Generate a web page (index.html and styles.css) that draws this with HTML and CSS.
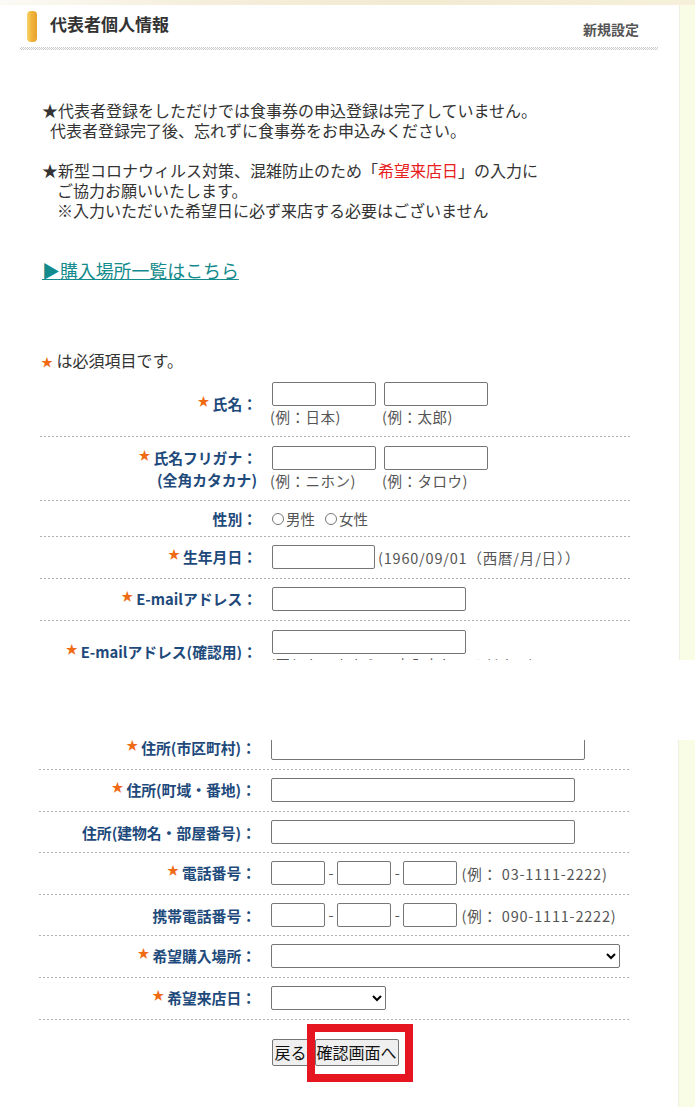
FILE: index.html
```html
<!DOCTYPE html>
<html lang="ja">
<head>
<meta charset="utf-8">
<title>代表者個人情報</title>
<link rel="stylesheet" href="styles.css">
</head>
<body>
<section class="shot shot-top">
  <div class="topstrip"></div>
  <div class="panel">
    <div class="head">
      <span class="head-bar"></span>
      <h1 class="head-title">代表者個人情報</h1>
      <span class="head-mode">新規設定</span>
    </div>
    <div class="head-dots"></div>

    <div class="notice n1">
      <p>★代表者登録をしただけでは食事券の申込登録は完了していません。</p>
      <p class="ind1">代表者登録完了後、忘れずに食事券をお申込みください。</p>
    </div>
    <div class="notice n2">
      <p>★新型コロナウィルス対策、混雑防止のため「<span class="red">希望来店日</span>」の入力に</p>
      <p class="ind2">ご協力お願いいたします。</p>
      <p class="ind2">※入力いただいた希望日に必ず来店する必要はございません</p>
    </div>
    <p class="link-line"><a class="shop-link" href="#">▶購入場所一覧はこちら</a></p>
    <p class="req-note"><span class="req">★</span> は必須項目です。</p>

    <div class="form">
      <div class="row row-help">
        <div class="label"><span class="req">★</span>氏名：</div>
        <div class="field">
          <div class="pair">
            <div class="col"><input class="in-name" type="text"><span class="help">(例：日本)</span></div>
            <div class="col"><input class="in-name" type="text"><span class="help">(例：太郎)</span></div>
          </div>
        </div>
      </div>
      <div class="row row-help">
        <div class="label"><span class="req">★</span>氏名フリガナ：<br>(全角カタカナ)</div>
        <div class="field">
          <div class="pair">
            <div class="col"><input class="in-name" type="text"><span class="help">(例：ニホン)</span></div>
            <div class="col"><input class="in-name" type="text"><span class="help">(例：タロウ)</span></div>
          </div>
        </div>
      </div>
      <div class="row row-radio">
        <div class="label">性別：</div>
        <div class="field radios">
          <label class="radio"><input type="radio" name="sex">男性</label>
          <label class="radio"><input type="radio" name="sex">女性</label>
        </div>
      </div>
      <div class="row">
        <div class="label"><span class="req">★</span>生年月日：</div>
        <div class="field inline">
          <input class="in-birth" type="text"><span class="after">(1960/09/01（西暦/月/日））</span>
        </div>
      </div>
      <div class="row">
        <div class="label"><span class="req">★</span>E-mailアドレス：</div>
        <div class="field"><input class="in-mail" type="text"></div>
      </div>
      <div class="row row-help">
        <div class="label"><span class="req">★</span>E-mailアドレス(確認用)：</div>
        <div class="field">
          <div class="col"><input class="in-mail" type="text"><span class="help">(同じものをもう一度入力してください)</span></div>
        </div>
      </div>
    </div>
  </div>
</section>

<div class="shot-gap"></div>

<section class="shot shot-bottom">
  <div class="panel panel-b">
    <div class="form form-b">
      <div class="row">
        <div class="label"><span class="req">★</span>住所(市区町村)：</div>
        <div class="field"><input class="in-city" type="text"></div>
      </div>
      <div class="row">
        <div class="label"><span class="req">★</span>住所(町域・番地)：</div>
        <div class="field"><input class="in-addr" type="text"></div>
      </div>
      <div class="row tight">
        <div class="label">住所(建物名・部屋番号)：</div>
        <div class="field"><input class="in-addr" type="text"></div>
      </div>
      <div class="row">
        <div class="label"><span class="req">★</span>電話番号：</div>
        <div class="field inline">
          <input class="in-tel" type="text"><span class="dash">-</span><input class="in-tel" type="text"><span class="dash">-</span><input class="in-tel" type="text"><span class="after ex">(例： 03-1111-2222)</span>
        </div>
      </div>
      <div class="row tight">
        <div class="label">携帯電話番号：</div>
        <div class="field inline">
          <input class="in-tel" type="text"><span class="dash">-</span><input class="in-tel" type="text"><span class="dash">-</span><input class="in-tel" type="text"><span class="after ex">(例： 090-1111-2222)</span>
        </div>
      </div>
      <div class="row">
        <div class="label"><span class="req">★</span>希望購入場所：</div>
        <div class="field"><select class="sel-shop"><option></option></select></div>
      </div>
      <div class="row">
        <div class="label"><span class="req">★</span>希望来店日：</div>
        <div class="field"><select class="sel-date"><option></option></select></div>
      </div>
      <div class="actions">
        <button class="btn" type="button">戻る</button>
        <span class="hl"><button class="btn" type="button">確認画面へ</button></span>
      </div>
    </div>
  </div>
</section>
</body>
</html>
```

FILE: styles.css
```css
* { box-sizing: border-box; }

html, body {
  margin: 0;
  padding: 0;
  background: #fff;
}

body {
  width: 695px;
  font-family: "Noto Sans CJK JP", "Noto Sans", sans-serif;
  color: #333;
}

p { margin: 0; }

.shot {
  overflow: hidden;
  background: #fafde5;
}

.shot-top { height: 660px; }
.shot-gap { height: 80px; background: #fff; }
.shot-bottom { height: 367px; }

.topstrip {
  height: 5px;
  background: linear-gradient(90deg, #fbfaf5 0%, #f5eedb 28%, #f3ead2 60%, #f6f0da 100%);
}

.panel {
  display: flow-root;
  width: 679px;
  min-height: 100%;
  background: #fff;
  box-shadow: 1px 0 1px #efefe2;
}

.panel-b {
  width: 678px;
  height: 100%;
}

/* header */
.head {
  display: flex;
  align-items: flex-start;
  height: 31px;
  margin: 6px 0 0 27px;
  padding-right: 40px;
}

.head-bar {
  flex: none;
  width: 10px;
  height: 31px;
  border-radius: 4px;
  background: linear-gradient(90deg, #f8d36a 0%, #f0b53a 45%, #e8a22c 100%);
}

.head-title {
  margin: 0 0 0 13px;
  font-size: 17px;
  line-height: 26px;
  font-weight: bold;
  color: #333;
}

.head-mode {
  margin-left: auto;
  margin-top: 8px;
  font-size: 14px;
  line-height: 20px;
  font-weight: bold;
  color: #555;
}

.head-dots {
  height: 3px;
  margin: 5px 21px 0 20px;
  background: repeating-conic-gradient(#cacaca 0 25%, #fff 0 50%) 0 0 / 2px 2px;
}

/* notices */
.notice {
  margin-left: 42px;
  font-size: 16px;
  line-height: 20px;
  color: #333;
}

.n1 { margin-top: 50px; }
.n2 { margin-top: 20px; }

.ind1 { padding-left: 8px; }
.ind2 { padding-left: 15px; }

.red { color: #e8201c; }

.link-line {
  margin: 38px 0 0 42px;
  font-size: 17.9px;
  line-height: 24px;
}

.shop-link {
  color: #138a8c;
  text-decoration: underline;
}

.req-note {
  margin: 68px 0 0 41px;
  font-size: 16px;
  line-height: 20px;
  color: #333;
}

.req {
  color: #ef6a12;
  font-size: 12px;
  margin-right: 3px;
  position: relative;
  top: -4px;
}

.req-note .req {
  top: 0;
  margin-right: 0;
}

/* form */
.form {
  width: 591px;
  margin: 1px 0 0 40px;
}

.form-b {
  margin: -12px 0 0 39px;
}

.row {
  display: grid;
  grid-template-columns: 232px 1fr;
  align-items: center;
  padding: 8px 0 10px;
  background: repeating-linear-gradient(90deg, #b0b0b0 0 2px, transparent 2px 4px) left bottom / 100% 1px no-repeat;
}

.row-help { padding: 9px 0 11px; }
.row-radio { padding: 7px 0 8px; }
.tight { padding-bottom: 9px; }

.label {
  padding-right: 15px;
  text-align: right;
  font-size: 14.8px;
  line-height: 21px;
  font-weight: bold;
  color: #1e4a7b;
}

.field {
  font-size: 14.5px;
  color: #555;
}

.pair {
  display: flex;
  gap: 8px;
}

.col {
  display: flex;
  flex-direction: column;
  align-items: flex-start;
}

.help {
  margin: 2px 0 0 -2px;
  line-height: 18px;
  font-size: 14.5px;
  letter-spacing: 0.5px;
  color: #555;
  white-space: nowrap;
}

.inline {
  display: flex;
  align-items: center;
}

.after {
  margin-left: 3px;
  letter-spacing: 0.8px;
  white-space: nowrap;
}

.after.ex { margin-left: 4px; }

.dash {
  padding: 0 3.6px;
  line-height: 18px;
}

input[type="text"] {
  height: 24px;
  margin: 0;
  padding: 1px 3px;
  border: 1px solid #767676;
  border-radius: 2px;
  background: #fff;
  font: 14px "Noto Sans CJK JP", sans-serif;
}

.in-name { width: 104px; }
.in-birth { width: 103px; }
.in-mail { width: 194px; }
.in-city { width: 314px; }
.in-addr { width: 304px; }
.in-tel { width: 54px; }

.radios {
  display: flex;
  align-items: center;
  gap: 10px;
  line-height: 18px;
}

.radio {
  display: flex;
  align-items: center;
}

.radio input {
  width: 12px;
  height: 12px;
  margin: 0 2px 0 0;
}

select {
  height: 24px;
  margin: 0;
  border: 1px solid #767676;
  border-radius: 2px;
  background: #fff;
  font: 14px "Noto Sans CJK JP", sans-serif;
}

.sel-shop { width: 349px; }
.sel-date { width: 115px; }

.actions {
  display: flex;
  justify-content: center;
  align-items: center;
  gap: 6px;
  margin-top: 19px;
  padding-left: 2px;
}

.btn {
  height: 27px;
  margin: 0;
  padding: 0 1px;
  border: 1px solid #767676;
  border-radius: 2px;
  background: #efefef;
  color: #111;
  font: 16px/23px "Noto Sans CJK JP", sans-serif;
}

.hl {
  position: relative;
  display: block;
}

.hl .btn { display: block; }

.hl::after {
  content: "";
  position: absolute;
  left: -8px;
  right: -14px;
  top: -15px;
  bottom: -16px;
  border: 8px solid #e5161f;
  pointer-events: none;
}
```
